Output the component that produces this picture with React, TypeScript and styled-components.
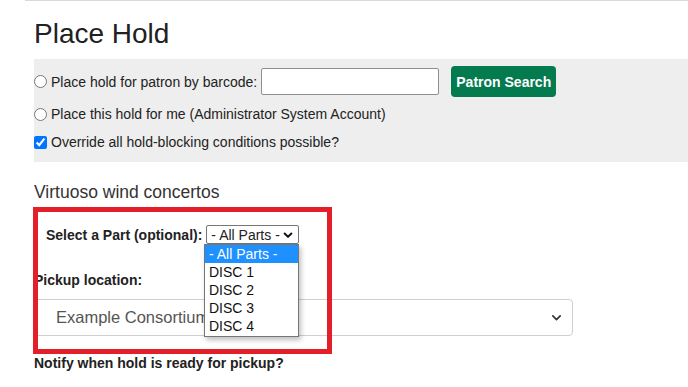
import styled, { createGlobalStyle } from 'styled-components';

const GlobalStyle = createGlobalStyle`
  html, body {
    margin: 0;
    padding: 0;
    background: #fff;
  }
  body {
    font-family: "Liberation Sans", Arial, sans-serif;
    color: #222;
  }
`;

const Page = styled.div`
  position: relative;
  width: 688px;
  height: 387px;
  overflow: hidden;
`;

const TopRule = styled.div`
  margin-left: 25px;
  height: 1px;
  background: #d9d9d9;
`;

const Content = styled.div`
  padding-left: 34px;
`;

const Heading = styled.h1`
  margin: 16px 0 8px 0;
  font-size: 28px;
  line-height: 34px;
  font-weight: 400;
  color: #212121;
`;

const Panel = styled.div`
  background: #eeeeee;
  padding: 7px 0 10px 0;
  display: flex;
  flex-direction: column;
`;

const Row = styled.label<{ $height: number; $gap: number }>`
  display: flex;
  align-items: center;
  height: ${(p) => p.$height}px;
  margin-top: ${(p) => p.$gap}px;
  font-size: 14px;
  color: #222;
  gap: 4px;
`;

const Radio = styled.input.attrs({ type: 'radio' })`
  margin: 0;
  width: 13px;
  height: 13px;
`;

const Check = styled.input.attrs({ type: 'checkbox' })`
  margin: 0;
  width: 13px;
  height: 13px;
  accent-color: #0075ff;
`;

const BarcodeInput = styled.input`
  box-sizing: border-box;
  width: 178px;
  height: 27px;
  margin-left: 0;
  border: 1px solid #8f8f8f;
  border-radius: 2px;
  background: #fff;
`;

const GreenButton = styled.button`
  box-sizing: border-box;
  margin-left: 8px;
  height: 31px;
  width: 105px;
  border: none;
  border-radius: 4px;
  background: #047a4f;
  color: #fff;
  font-family: "Liberation Sans", Arial, sans-serif;
  font-weight: 700;
  font-size: 14px;
  padding: 0;
`;

const Title = styled.h4`
  margin: 19px 0 0 0;
  font-size: 17.5px;
  line-height: 22px;
  font-weight: 400;
  color: #333;
`;

const PartRow = styled.div`
  display: flex;
  align-items: center;
  margin-top: 22px;
  padding-left: 12px;
  height: 19px;
  gap: 4px;
`;

const BoldLabel = styled.div<{ $size: number }>`
  font-size: ${(p) => p.$size}px;
  font-weight: 700;
  line-height: 20px;
  color: #222;
`;

const SmallSelect = styled.div`
  box-sizing: border-box;
  width: 93px;
  height: 19px;
  border: 1px solid #767676;
  border-radius: 2px;
  display: flex;
  align-items: center;
  justify-content: space-between;
  padding: 0 4px 0 4px;
  font-size: 14px;
  color: #222;
  background: #fff;
`;

const PickupLabel = styled(BoldLabel)`
  margin-top: 26px;
`;

const BigSelect = styled.div`
  box-sizing: border-box;
  margin-top: 9px;
  width: 539px;
  height: 37px;
  border: 1px solid #cfcfcf;
  border-radius: 4px;
  display: flex;
  align-items: center;
  justify-content: space-between;
  padding: 0 9px 0 21px;
  font-size: 16.5px;
  color: #555;
`;

const NotifyLabel = styled(BoldLabel)`
  margin-top: 17px;
`;

const Options = styled.div`
  position: absolute;
  left: 204px;
  top: 244px;
  width: 95px;
  box-sizing: border-box;
  border: 1px solid #767676;
  background: #fff;
  box-shadow: 2px 3px 5px rgba(0, 0, 0, 0.25);
  padding: 0 0 1px 0;
  font-size: 14px;
`;

const OptionItem = styled.div<{ $active?: boolean }>`
  height: 18px;
  line-height: 18px;
  padding-left: 4px;
  background: ${(p) => (p.$active ? '#1e90ff' : 'transparent')};
  color: ${(p) => (p.$active ? '#fff' : '#111')};
`;

const Highlight = styled.div`
  position: absolute;
  left: 33px;
  top: 207px;
  width: 299px;
  height: 147px;
  box-sizing: border-box;
  border: 5px solid #e3202a;
  pointer-events: none;
`;

const Chevron = ({ size, color, weight }: { size: number; color: string; weight: number }) => (
  <svg width={size} height={size} viewBox="0 0 16 16">
    <path d="M3.5 6l4.5 4.5 4.5-4.5" fill="none" stroke={color} strokeWidth={weight} strokeLinecap="round" strokeLinejoin="round" />
  </svg>
);

const parts = ['- All Parts -', 'DISC 1', 'DISC 2', 'DISC 3', 'DISC 4'];

export default function App() {
  return (
    <Page>
      <GlobalStyle />
      <TopRule />
      <Content>
        <Heading>Place Hold</Heading>
        <Panel>
          <Row $height={31} $gap={0}>
            <Radio name="who" />
            <span>Place hold for patron by barcode:</span>
            <BarcodeInput />
            <GreenButton>Patron Search</GreenButton>
          </Row>
          <Row $height={20} $gap={7}>
            <Radio name="who" />
            <span>Place this hold for me (Administrator System Account)</span>
          </Row>
          <Row $height={20} $gap={8}>
            <Check defaultChecked />
            <span>Override all hold-blocking conditions possible?</span>
          </Row>
        </Panel>
        <Title>Virtuoso wind concertos</Title>
        <PartRow>
          <BoldLabel $size={14}>Select a Part (optional):</BoldLabel>
          <SmallSelect>
            <span>- All Parts -</span>
            <Chevron size={12} color="#111" weight={2.6} />
          </SmallSelect>
        </PartRow>
        <PickupLabel $size={14}>Pickup location:</PickupLabel>
        <BigSelect>
          <span>Example Consortium</span>
          <Chevron size={13} color="#343a40" weight={2.2} />
        </BigSelect>
        <NotifyLabel $size={14}>Notify when hold is ready for pickup?</NotifyLabel>
      </Content>
      <Options>
        {parts.map((p, i) => (
          <OptionItem key={p} $active={i === 0}>
            {p}
          </OptionItem>
        ))}
      </Options>
      <Highlight />
    </Page>
  );
}
